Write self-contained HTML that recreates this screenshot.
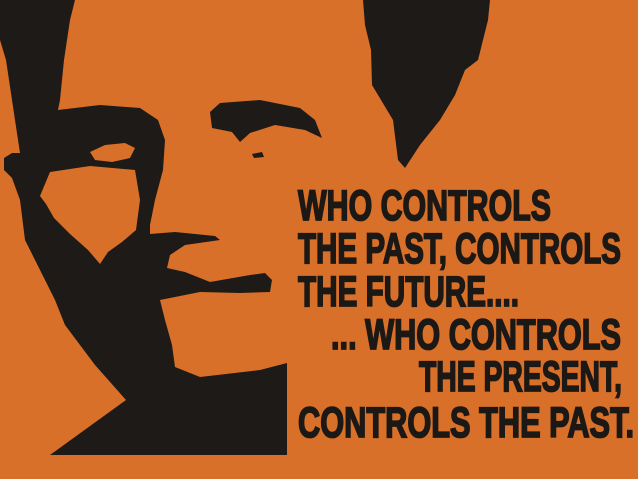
<!DOCTYPE html>
<html><head><meta charset="utf-8"><style>
html,body{margin:0;padding:0;background:#d9702a;}
svg{display:block}
text{font-family:"Liberation Sans Narrow","Liberation Sans",sans-serif;font-weight:bold;fill:#1c1815;stroke:#1c1815;stroke-width:1.8;font-size:43px}
</style></head><body>
<svg width="638" height="479" viewBox="0 0 638 479" xmlns="http://www.w3.org/2000/svg">
<rect width="638" height="479" fill="#d9702a"/>
<g fill="#1e1a17">
<path d="M0,0 L75,0 L70,20 L64,60 L60,100 L58,110 L100,105 L140,108 L158,120 L165,140 L163,170 L155,200 L150,225 L150,234 L175,232 L215,236 L220,240 L185,245 L170,255 L167,268 L185,272 L210,282 L250,275 L265,273 L272,280 L270,292 L240,293 L200,292 L160,300 L165,320 L172,345 L175,367 L200,377 L260,370 L287,363 L287,455 L50,455 L126,400 L95,365 L65,325 L55,300 L40,270 L25,240 L20,200 L12,178 L4,170 L4,158 L12,153 L20,153 L15,120 L6,60 L0,40 Z"/>
<path d="M363,0 L490,0 L488,20 L478,60 L465,70 L455,95 L440,120 L420,145 L405,168 L398,160 L393,120 L372,85 L371,50 L365,25 Z"/>
<path d="M210,112 L220,103 L260,100 L300,108 L315,120 L322,138 L305,130 L275,125 L250,133 L240,142 L232,132 L212,128 Z"/>
<path d="M252,154 L262,152 L264,157 L254,158 Z"/>
</g>
<g fill="#d9702a">
<path d="M50,172 L90,166 L135,170 L140,200 L136,230 L122,242 L108,252 L100,264 L88,250 L70,234 L54,218 L46,204 L40,196 Z"/>
<path d="M90,152 L105,145 L125,143 L135,148 L130,158 L112,162 L95,160 Z"/>
</g>
<text x="298" y="220" textLength="253" lengthAdjust="spacingAndGlyphs">WHO CONTROLS</text>
<text x="298" y="263" textLength="323" lengthAdjust="spacingAndGlyphs">THE PAST, CONTROLS</text>
<text x="298" y="306" textLength="221" lengthAdjust="spacingAndGlyphs">THE FUTURE....</text>
<text x="331" y="349" textLength="290" lengthAdjust="spacingAndGlyphs">... WHO CONTROLS</text>
<text x="419" y="391" textLength="203" lengthAdjust="spacingAndGlyphs">THE PRESENT,</text>
<text x="298" y="437" textLength="336" lengthAdjust="spacingAndGlyphs">CONTROLS THE PAST.</text>
</svg>
</body></html>
